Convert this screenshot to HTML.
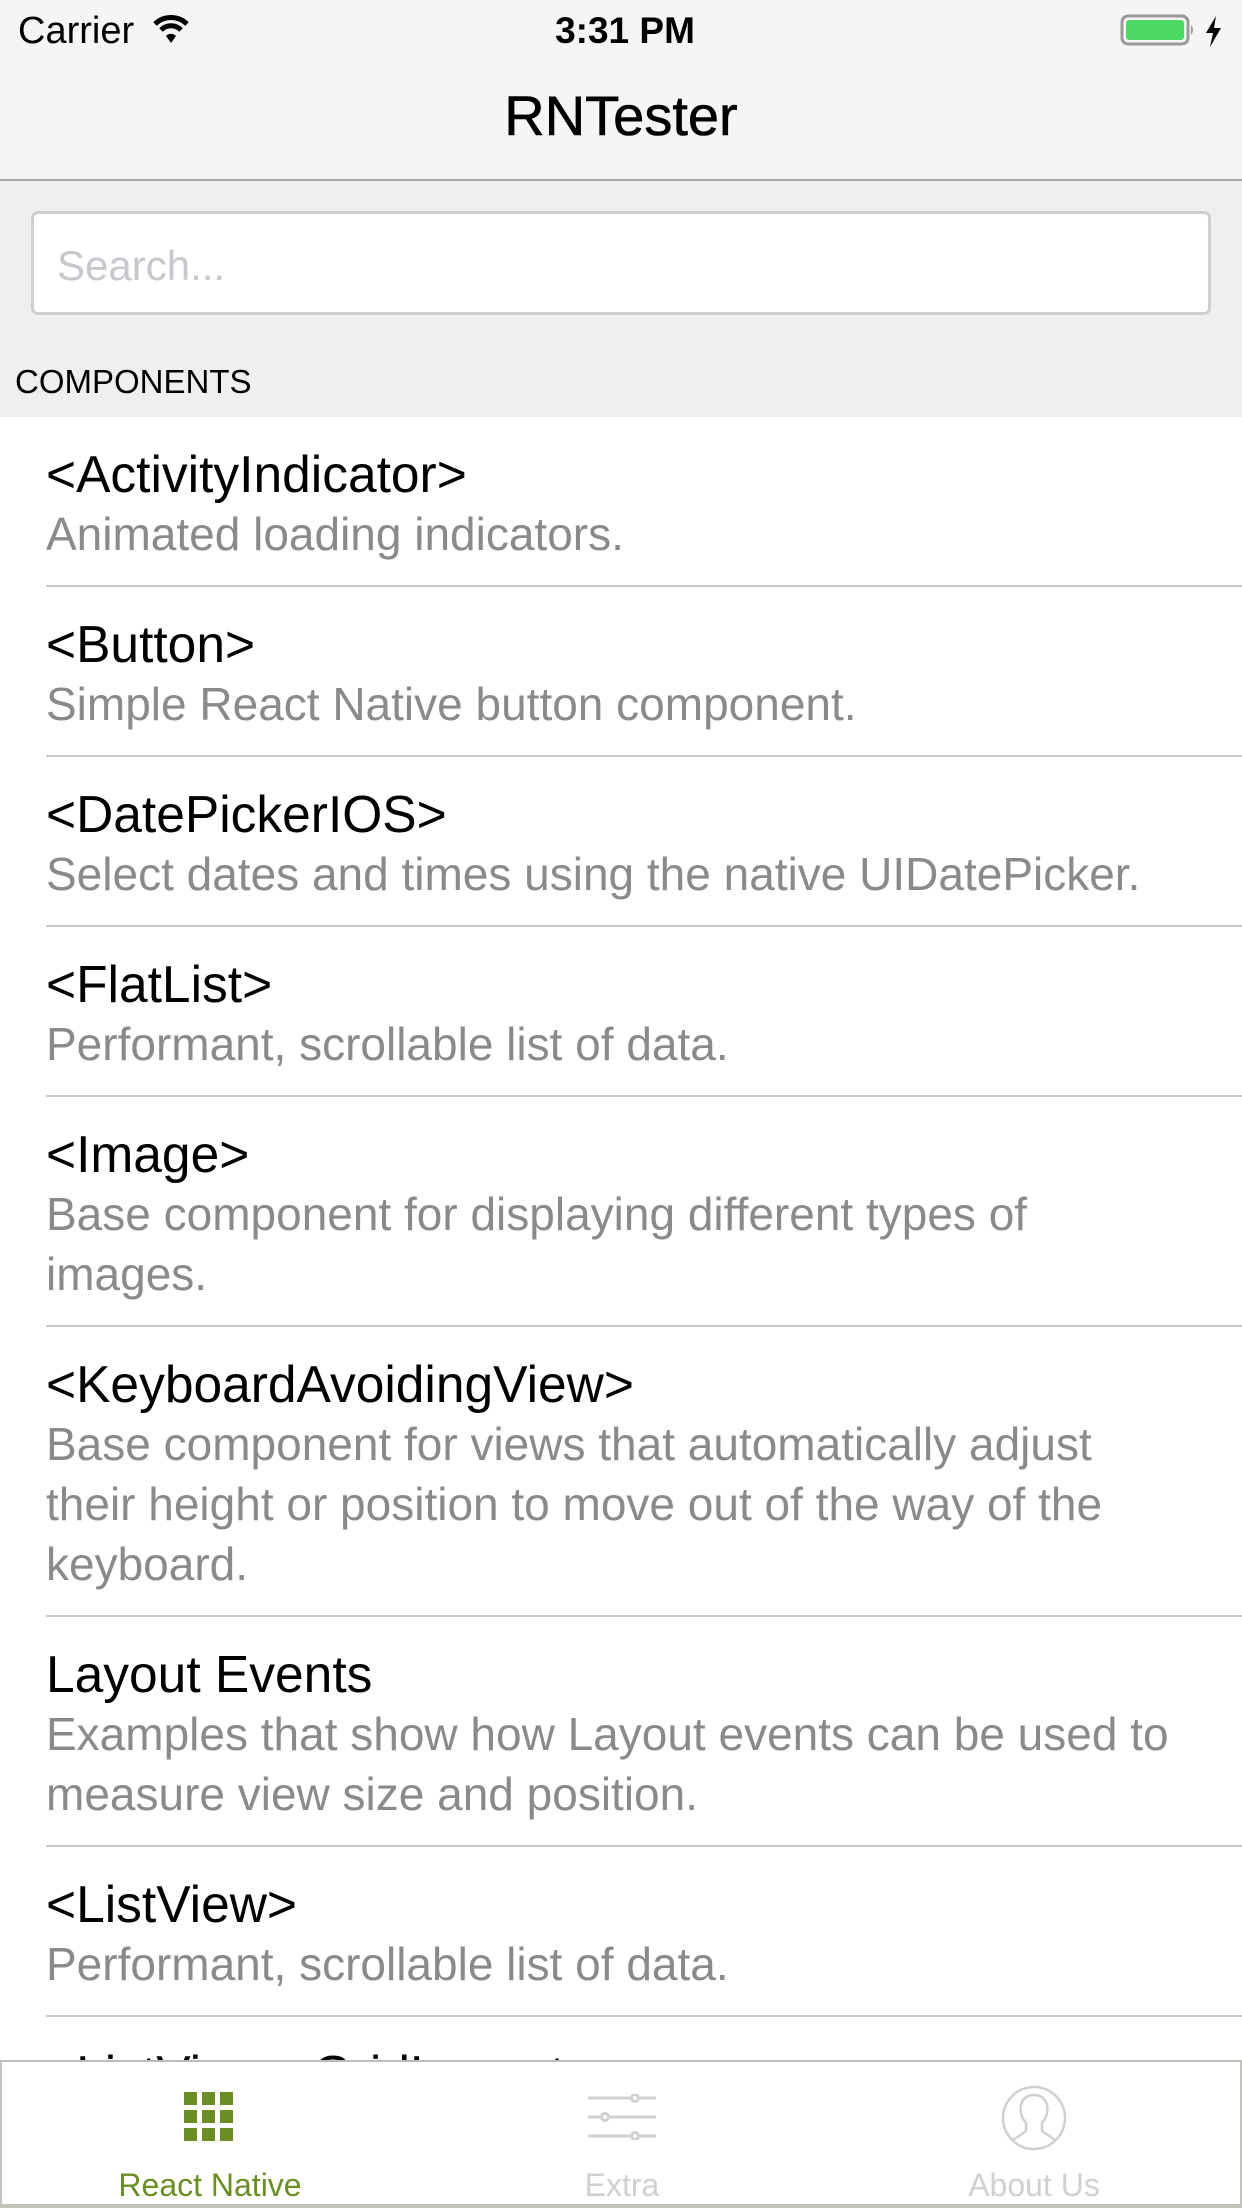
<!DOCTYPE html>
<html><head><meta charset="utf-8"><style>
*{margin:0;padding:0;box-sizing:border-box}
body{width:1242px;height:2208px;overflow:hidden;background:#fff;font-family:"Liberation Sans",sans-serif;position:relative}
.top{position:absolute;left:0;top:0;width:1242px;height:181px;background:#f5f5f5;border-bottom:2px solid #a7a7aa}
.carrier{position:absolute;left:18px;top:10px;font-size:38px;line-height:42px}
.time{position:absolute;left:0;width:1250px;text-align:center;top:10px;font-size:37px;line-height:42px;font-weight:bold}
.title{position:absolute;left:0;width:1242px;text-align:center;top:84px;font-size:56px;line-height:64px;-webkit-text-stroke:0.6px #000}
.gray{position:absolute;left:0;top:181px;width:1242px;height:236px;background:#efeff0}
.search{position:absolute;left:31px;top:211px;width:1180px;height:104px;background:#fff;border:3px solid #cfcfcf;border-radius:7px}
.search span{position:absolute;left:23px;top:28px;font-size:42px;line-height:48px;color:#c7c7cd}
.sec{position:absolute;left:15px;top:363px;font-size:33px;line-height:38px;color:#000}
.list{position:absolute;left:0;top:416.5px;width:1242px;background:#fff}
.row{position:relative;padding:27px 40px 21px 46px;border-bottom:2px solid #c8c8c8}
.t{font-size:51.5px;line-height:60px;color:#000}
.d{font-size:46px;line-height:60px;color:#8a8a8a}
.sep{position:absolute;left:0;bottom:-2px;width:46px;height:2px;background:#fff}
.tab{position:absolute;left:0;top:2060px;width:1242px;height:148px;background:#fff;border-top:2px solid #bcbcbc;border-left:2px solid #c4c4bc;border-right:2px solid #c4c4bc;border-bottom:4px solid #c4c4bc}
.lbl{position:absolute;top:104px;width:300px;text-align:center;font-size:32px;line-height:38px}
</style></head><body>
<div class="top">
<div class="carrier">Carrier
<svg width="40" height="34" viewBox="0 0 40 34" style="vertical-align:-3px;margin-left:6px"><path d="M4 12 A23 23 0 0 1 36 12" stroke="#000" stroke-width="5" fill="none"/><path d="M10 18 A14 14 0 0 1 30 18" stroke="#000" stroke-width="5" fill="none"/><path d="M15 24 A7 7 0 0 1 25 24 L20 31 Z" fill="#000"/></svg></div>
<div class="time">3:31 PM</div>
<svg style="position:absolute;left:1120px;top:14px" width="110" height="34" viewBox="0 0 110 34"><rect x="2" y="2" width="66" height="28" rx="6" fill="none" stroke="#999" stroke-width="3"/><rect x="6" y="6" width="58" height="20" rx="3" fill="#4cd964"/><path d="M71 11 q4 5 0 10" fill="#999"/><path d="M96 2 L86 19 L93 19 L90 33 L101 14 L94 14 Z" fill="#000"/></svg>
<div class="title">RNTester</div>
</div>
<div class="gray"></div>
<div class="search"><span>Search...</span></div>
<div class="sec">COMPONENTS</div>
<div class="list">
<div class="row"><div class="sep"></div><div class="t">&lt;ActivityIndicator&gt;</div><div class="d">Animated loading indicators.</div></div>
<div class="row"><div class="sep"></div><div class="t">&lt;Button&gt;</div><div class="d">Simple React Native button component.</div></div>
<div class="row"><div class="sep"></div><div class="t">&lt;DatePickerIOS&gt;</div><div class="d">Select dates and times using the native UIDatePicker.</div></div>
<div class="row"><div class="sep"></div><div class="t">&lt;FlatList&gt;</div><div class="d">Performant, scrollable list of data.</div></div>
<div class="row"><div class="sep"></div><div class="t">&lt;Image&gt;</div><div class="d">Base component for displaying different types of<br>images.</div></div>
<div class="row"><div class="sep"></div><div class="t">&lt;KeyboardAvoidingView&gt;</div><div class="d">Base component for views that automatically adjust<br>their height or position to move out of the way of the<br>keyboard.</div></div>
<div class="row"><div class="sep"></div><div class="t">Layout Events</div><div class="d">Examples that show how Layout events can be used to<br>measure view size and position.</div></div>
<div class="row"><div class="sep"></div><div class="t">&lt;ListView&gt;</div><div class="d">Performant, scrollable list of data.</div></div>
<div class="row"><div class="t">&lt;ListView - GridLayout&gt;</div><div class="d">Displaying data in a grid.</div></div>
</div>
<div class="tab">
<svg style="position:absolute;left:182px;top:30px" width="50" height="50" viewBox="0 0 50 50" fill="#6b8e23">
<rect x="0" y="0" width="13" height="13"/><rect x="18" y="0" width="13" height="13"/><rect x="36" y="0" width="13" height="13"/>
<rect x="0" y="18" width="13" height="13"/><rect x="18" y="18" width="13" height="13"/><rect x="36" y="18" width="13" height="13"/>
<rect x="0" y="36" width="13" height="13"/><rect x="18" y="36" width="13" height="13"/><rect x="36" y="36" width="13" height="13"/></svg>
<svg style="position:absolute;left:584px;top:32px" width="72" height="46" viewBox="0 0 72 46" stroke="#d0d0d0" stroke-width="3" fill="none">
<path d="M2 4 H44 M54 4 H70"/><circle cx="49" cy="4" r="3.5"/>
<path d="M2 23 H14 M24 23 H70"/><circle cx="19" cy="23" r="3.5"/>
<path d="M2 42 H44 M54 42 H70"/><circle cx="49" cy="42" r="3.5"/></svg>
<svg style="position:absolute;left:999px;top:23px" width="66" height="66" viewBox="0 0 66 66" stroke="#d0d0d0" stroke-width="2.5" fill="none">
<circle cx="33" cy="33" r="31"/><path d="M12 55 L25 46 L25 38 Q18 30 20 20 Q23 10 33 10 Q43 10 46 20 Q48 30 41 38 L41 46 L54 55"/></svg>
<div class="lbl" style="left:58px;color:#6b8e23">React Native</div>
<div class="lbl" style="left:470px;color:#d0d0d0">Extra</div>
<div class="lbl" style="left:882px;color:#d0d0d0">About Us</div>
</div>
</body></html>
